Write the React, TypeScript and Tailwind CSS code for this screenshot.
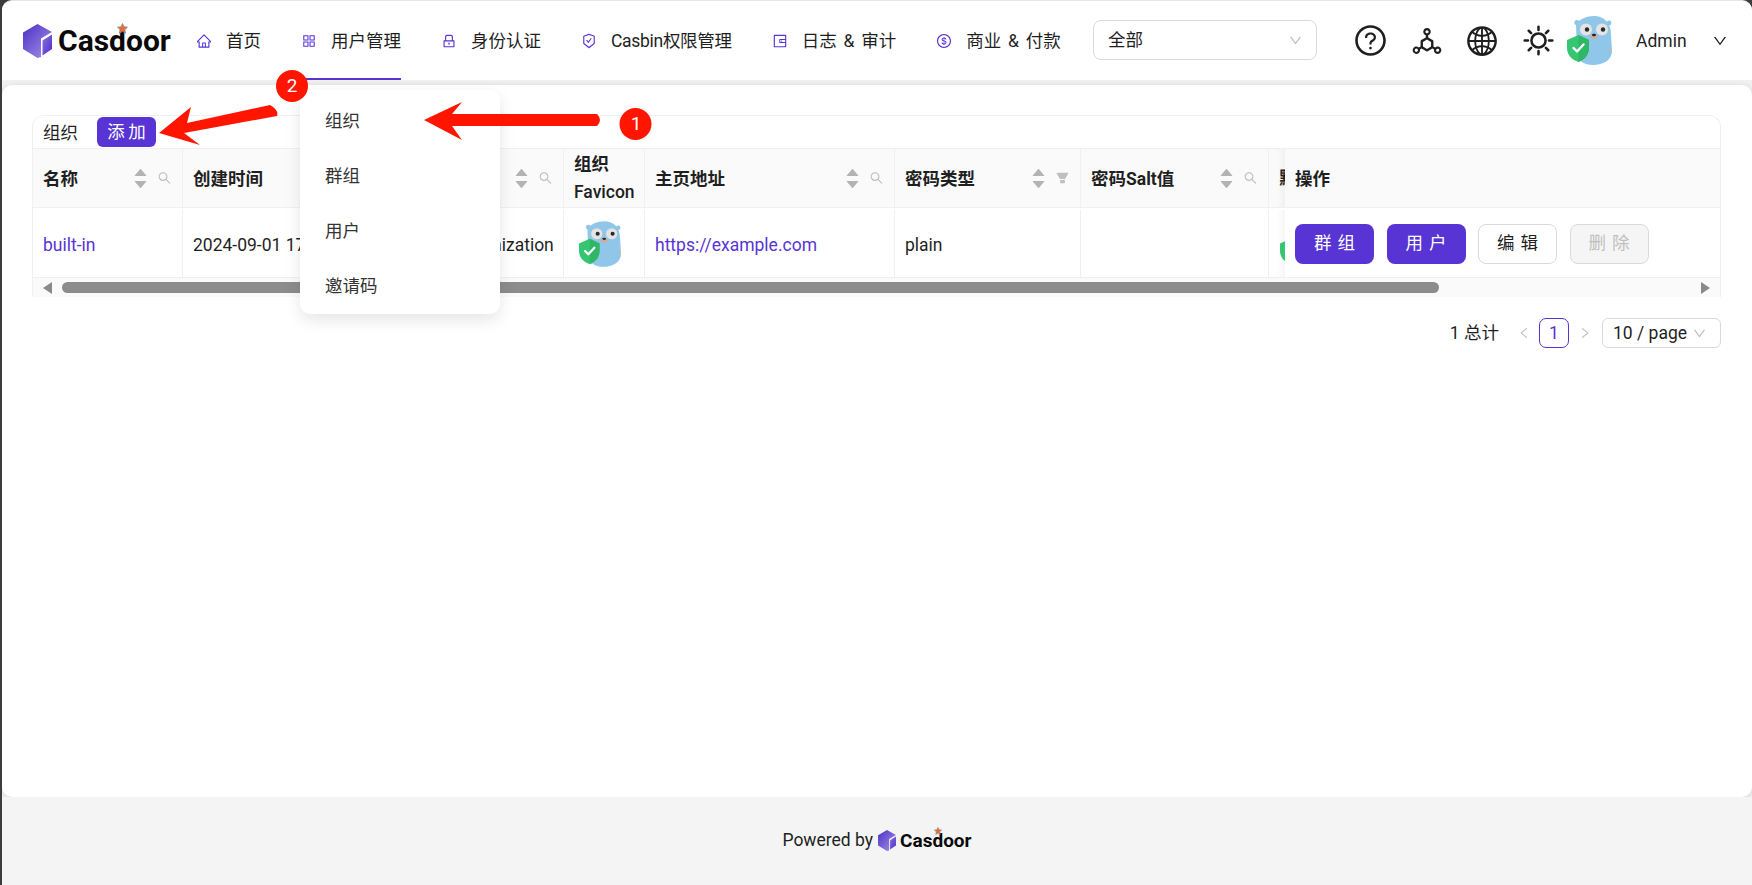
import React from "react";
import {
  AiOutlineHome, AiOutlineAppstore, AiOutlineLock, AiOutlineSafetyCertificate, AiOutlineWallet, AiOutlineDollar,
  AiOutlineQuestionCircle, AiOutlineDeploymentUnit, AiOutlineGlobal, AiOutlineDown, AiOutlineLeft, AiOutlineRight,
  AiOutlineSearch, AiFillCaretUp, AiFillCaretDown, AiFillFilter,
} from "react-icons/ai";

function Cube({ className }: { className: string }) {
  return (
    <svg viewBox="0 0 29 34" className={className}>
      <defs>
        <linearGradient id="cubeA" x1="0" y1="0" x2="1" y2="1">
          <stop offset="0" stopColor="#4a30c4" />
          <stop offset="1" stopColor="#a995ea" />
        </linearGradient>
        <linearGradient id="cubeB" x1="0" y1="0" x2="1" y2="1">
          <stop offset="0" stopColor="#8a70e2" />
          <stop offset="1" stopColor="#4e2ccb" />
        </linearGradient>
      </defs>
      <path d="M14.5 0 29 8 18 14.5V33L14.5 34 0 25V8.5Z" fill="url(#cubeA)" />
      <path d="M29 10.5V25L19.5 31.5V16.5Z" fill="url(#cubeB)" />
    </svg>
  );
}

function Gopher({ className }: { className: string }) {
  return (
    <svg viewBox="0 0 45 49" className={className}>
      <circle cx="10" cy="6.5" r="2.6" fill="#8ec5e8" />
      <circle cx="42" cy="7" r="2.4" fill="#8ec5e8" />
      <path d="M9 9C12 3 20 0 27 0 37 0 44 7 44 18L45 35C45 44 36 49 26 49 16 49 10 44 10 35Z" fill="#8fc6e9" />
      <circle cx="44.5" cy="34" r="1.6" fill="#d8b4a0" />
      <circle cx="19" cy="13.5" r="6" fill="#e4e4e4" />
      <circle cx="35" cy="13.5" r="6" fill="#e4e4e4" />
      <circle cx="20" cy="13.5" r="2.2" fill="#2a2a2a" />
      <circle cx="36" cy="13.5" r="2.2" fill="#2a2a2a" />
      <ellipse cx="27" cy="20.5" rx="3.6" ry="2.2" fill="#d8a98c" />
      <ellipse cx="27" cy="19" rx="2" ry="1.2" fill="#222" />
      <path d="M0 24 11.500 19 22 24V32C22 39 17 44 11.500 46 5 44 0 39 0 32Z" fill="#36c672" />
      <path d="M11.500 19 22 24V32C22 39 17 44 11.500 46Z" fill="#2fb766" />
      <path d="M6.500 32 10 35.500 16.500 28.500" fill="none" stroke="#fff" strokeWidth="2.4" strokeLinecap="round" strokeLinejoin="round" />
    </svg>
  );
}

function Star({ className }: { className: string }) {
  return (
    <svg viewBox="0 0 10 10" className={className}>
      <path d="M5 .5 6.300 3.500 9.500 3.800 7.100 6 7.800 9.300 5 7.600 2.200 9.300 2.900 6 .5 3.800 3.700 3.500Z" fill="#f26a2a" stroke="#8a8a8a" strokeWidth=".8" />
    </svg>
  );
}

function Sun({ className }: { className: string }) {
  return (
    <svg viewBox="0 0 28 28" fill="none" stroke="#1f1f1f" strokeWidth="2.300" strokeLinecap="round" className={className}>
      <circle cx="14" cy="14" r="6.400" />
      <path d="M14 1.500V4.500M14 23.500V26.500M1.500 14H4.500M23.500 14H26.500M5.200 5.200 7.300 7.300M20.700 20.700 22.800 22.800M22.800 5.200 20.700 7.300M7.300 20.700 5.200 22.800" />
    </svg>
  );
}

function Sorter() {
  return (
    <span className="flex w-[12px] flex-col items-center text-[17px] leading-none text-[#b3b3b3]">
      <AiFillCaretUp className="-mb-[5px]" />
      <AiFillCaretDown />
    </span>
  );
}

function NavItem({ icon, label, active, cls }: { icon: React.ReactNode; label: string; active?: boolean; cls?: string }) {
  return (
    <div className={`relative flex h-[79px] items-center gap-[14px] ${active ? "border-b-2 border-[#5734d3] pt-[2px]" : ""}`}>
      <span className="flex w-[16px] justify-center text-[20px] text-[#5734d3]">{icon}</span>
      <span className={`whitespace-nowrap pt-[2px] ${cls ?? ""}`}>{label}</span>
    </div>
  );
}

function HeadCell({ w, label, filter, right }: { w: string; label: React.ReactNode; filter?: boolean; right?: boolean }) {
  return (
    <div className={`flex h-full shrink-0 items-center border-r border-[#f0f0f0] pl-[10px] pr-[10px] ${w}`}>
      <span className="min-w-0 flex-1 overflow-hidden whitespace-nowrap pt-[2px] font-bold">{label}</span>
      {!right && <Sorter />}
      {!right && (
        <span className="ml-[11px] flex w-[15px] justify-center text-[18px] text-[#bfbfbf]">
          {filter ? <AiFillFilter /> : <AiOutlineSearch />}
        </span>
      )}
    </div>
  );
}

function BodyCell({ w, children, cls }: { w: string; children?: React.ReactNode; cls?: string }) {
  return (
    <div className={`flex h-full shrink-0 items-center overflow-hidden whitespace-nowrap border-r border-[#f0f0f0] pt-[4px] ${cls && cls.includes("pl-") ? "" : "pl-[10px]"} ${w} ${cls ?? ""}`}>
      {children}
    </div>
  );
}

function Btn({ label, kind }: { label: string; kind: "primary" | "plain" | "disabled" }) {
  const cls =
    kind === "primary"
      ? "bg-[#5734d3] text-white"
      : kind === "plain"
        ? "border border-[#d9d9d9] bg-white text-[#1f1f1f]"
        : "border border-[#d9d9d9] bg-[#f5f5f5] text-[#bfbfbf]";
  return (
    <div className={`flex h-[40px] w-[79px] items-center justify-center rounded-[8px] ${cls}`}>
      <span className="mr-[-0.34em] tracking-[0.34em]">{label}</span>
    </div>
  );
}

export default function App() {
  return (
    <div className="relative h-[885px] w-[1752px] overflow-hidden bg-[#3c3c3c] font-['Roboto','Noto_Sans_CJK_SC',sans-serif] text-[17.5px] text-[#1f1f1f]">
      <div className="ml-[2px] flex h-[885px] flex-col overflow-hidden rounded-t-[10px] border-t border-[#e6e6e6] bg-[#f1f1f1]">
        {/* header */}
        <header className="flex h-[79px] shrink-0 items-center bg-white">
          <div className="relative ml-[21px] flex w-[170px] items-center gap-[6px]">
            <Cube className="h-[34px] w-[29px]" />
            <span className="font-['Roboto',sans-serif] text-[30px] font-bold leading-none text-[#0a0a0a]">Casdoor</span>
            <Star className="absolute left-[94px] top-[-1px] h-[11px] w-[11px]" />
          </div>
          <nav className="ml-[3px] flex w-[872px] items-center gap-[40px]">
            <NavItem icon={<AiOutlineHome />} label="首页" />
            <NavItem icon={<AiOutlineAppstore />} label="用户管理" active />
            <NavItem icon={<AiOutlineLock />} label="身份认证" />
            <NavItem icon={<AiOutlineSafetyCertificate />} label="Casbin权限管理" cls="tracking-[-0.3px]" />
            <NavItem icon={<AiOutlineWallet />} label="日志 & 审计" cls="[word-spacing:2.5px]" />
            <NavItem icon={<AiOutlineDollar />} label="商业 & 付款" cls="[word-spacing:2.5px]" />
          </nav>
          <div className="-mt-[1px] ml-[25px] flex h-[40px] w-[224px] items-center justify-between rounded-[8px] border border-[#d9d9d9] pl-[14px] pr-[13px]">
            <span>全部</span>
            <AiOutlineDown className="text-[15px] text-[#bfbfbf]" />
          </div>
          <AiOutlineQuestionCircle className="ml-[36px] shrink-0 text-[35px]" />
          <AiOutlineDeploymentUnit className="ml-[22px] shrink-0 text-[34px] text-[#1f1f1f]" />
          <AiOutlineGlobal className="ml-[21px] shrink-0 text-[34px]" />
          <Sun className="ml-[24px] h-[31px] w-[31px] shrink-0" />
          <Gopher className="ml-[13px] h-[49px] w-[45px] shrink-0" />
          <span className="ml-[24px] pt-[2px]">Admin</span>
          <AiOutlineDown className="ml-[25px] shrink-0 text-[16px]" />
        </header>

        {/* main */}
        <main className="mt-[5px] h-[712px] shrink-0 rounded-[10px] bg-white px-[30px] pt-[30px] shadow-[0_1px_6px_rgba(0,0,0,0.12)]">
          <div className="w-[1689px] rounded-t-[12px] border-x border-t border-[#f0f0f0] bg-white">
            <div className="flex h-[32px] items-center pl-[10px]">
              <span className="pt-[2px]">组织</span>
              <div className="ml-[19px] flex h-[30px] w-[59px] items-center justify-center rounded-[6px] bg-[#5734d3] text-white">
                <span className="mr-[-0.2em] tracking-[0.2em]">添加</span>
              </div>
            </div>
            <div className="flex h-[60px] overflow-hidden border-y border-[#f0f0f0] bg-[#fafafa]">
              <HeadCell w="w-[150px]" label="名称" />
              <HeadCell w="w-[196px]" label="创建时间" right />
              <HeadCell w="w-[185px]" label="显示名称" />
              <div className="flex h-full w-[81px] shrink-0 flex-col justify-center border-r border-[#f0f0f0] pl-[10px] leading-[28px]">
                <span className="font-bold">组织</span>
                <span className="font-medium">Favicon</span>
              </div>
              <HeadCell w="w-[250px]" label="主页地址" />
              <HeadCell w="w-[186px]" label="密码类型" filter />
              <HeadCell w="w-[188px]" label="密码Salt值" />
              <div className="w-[16px] shrink-0 overflow-hidden whitespace-nowrap pl-[10px] pt-[16px] font-bold shadow-[inset_-8px_0_8px_-6px_rgba(0,0,0,0.06)]">默认</div>
              <div className="flex flex-1 items-center pl-[10px] pt-[2px] font-bold">操作</div>
            </div>
            <div className="flex h-[70px] overflow-hidden border-b border-[#f0f0f0] pt-[2px]">
              <BodyCell w="w-[150px]" cls="text-[#5734d3]">built-in</BodyCell>
              <BodyCell w="w-[196px]">2024-09-01 17:00:00</BodyCell>
              <BodyCell w="w-[185px]" cls="pl-[18px]">Built-in Organization</BodyCell>
              <BodyCell w="w-[81px]"><Gopher className="-mt-[3px] ml-[5px] h-[46px] w-[42px]" /></BodyCell>
              <BodyCell w="w-[250px]" cls="text-[#5734d3]">https://example.com</BodyCell>
              <BodyCell w="w-[186px]">plain</BodyCell>
              <BodyCell w="w-[188px]" />
              <div className="flex h-full w-[16px] shrink-0 items-center justify-end overflow-hidden shadow-[inset_-8px_0_8px_-6px_rgba(0,0,0,0.06)]">
                <Gopher className="mr-[-37px] h-[46px] w-[42px] shrink-0" />
              </div>
              <div className="flex flex-1 items-center gap-[12.5px] pl-[10px]">
                <Btn label="群组" kind="primary" />
                <Btn label="用户" kind="primary" />
                <Btn label="编辑" kind="plain" />
                <Btn label="删除" kind="disabled" />
              </div>
            </div>
            <div className="flex h-[19px] items-center bg-[#fafafa] pl-[10px] pr-[10px]">
              <svg viewBox="0 0 9 12" className="h-[12px] w-[9px]"><path d="M9 0V12L0 6Z" fill="#8a8a8a" /></svg>
              <div className="ml-[10px] h-[11px] w-[1377px] rounded-full bg-[#8c8c8c]" />
              <svg viewBox="0 0 9 12" className="ml-auto h-[12px] w-[9px]"><path d="M0 0V12L9 6Z" fill="#8a8a8a" /></svg>
            </div>
          </div>
          <div className="mt-[21px] flex h-[30px] w-[1689px] items-center justify-end">
            <span>1 总计</span>
            <AiOutlineLeft className="ml-[17.5px] shrink-0 text-[14px] text-[#bfbfbf]" />
            <div className="ml-[8.5px] flex h-[30px] w-[30px] items-center justify-center rounded-[7px] border border-[#5734d3] text-[#5734d3]">1</div>
            <AiOutlineRight className="ml-[8.5px] shrink-0 text-[14px] text-[#bfbfbf]" />
            <div className="ml-[10.5px] flex h-[30px] w-[119px] items-center justify-between rounded-[6px] border border-[#d9d9d9] pl-[10px] pr-[13px]">
              <span>10 / page</span>
              <AiOutlineDown className="text-[15px] text-[#bfbfbf]" />
            </div>
          </div>
        </main>

        {/* footer */}
        <footer className="flex flex-1 items-center justify-center bg-[#f4f4f4] pb-[1px]">
          <span>Powered by</span>
          <div className="relative ml-[5px] flex items-center gap-[4px]">
            <Cube className="h-[21px] w-[18px]" />
            <span className="text-[19px] font-bold leading-none text-[#0a0a0a]">Casdoor</span>
            <Star className="absolute left-[56px] top-[-3px] h-[8px] w-[8px]" />
          </div>
        </footer>
      </div>

      {/* dropdown menu */}
      <div className="absolute left-[300px] top-[90px] flex h-[224px] w-[200px] flex-col justify-around rounded-[10px] bg-white pt-[3px] pl-[25px] text-[#333] shadow-[0_6px_16px_rgba(0,0,0,0.1)]">
        <span>组织</span>
        <span>群组</span>
        <span>用户</span>
        <span>邀请码</span>
      </div>

      {/* annotations */}
      <svg className="absolute left-0 top-0 h-[885px] w-[1752px]" viewBox="0 0 1752 885">
        <path d="M424 120 462 102 452 114 597 114Q603 120 597 126L452 126 462 140Z" fill="#ff1500" />
        <path d="M159 133 191 107 187 123 270 105Q279 110 277 116L184 133 200 145Z" fill="#ff1500" />
        <circle cx="635.500" cy="124" r="16" fill="#ff1500" />
        <circle cx="292" cy="86" r="16" fill="#ff1500" />
      </svg>
      <span className="absolute left-[620px] top-[108px] flex h-[32px] w-[32px] items-center justify-center text-[19px] text-white">1</span>
      <span className="absolute left-[276px] top-[70px] flex h-[32px] w-[32px] items-center justify-center text-[19px] text-white">2</span>
    </div>
  );
}
